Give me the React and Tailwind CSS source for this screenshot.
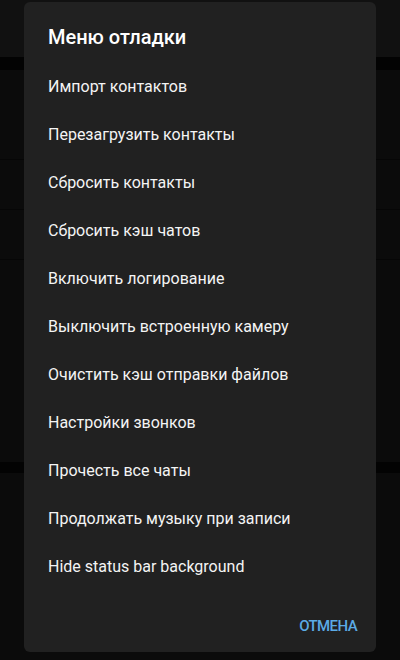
const items = [
  'Импорт контактов',
  'Перезагрузить контакты',
  'Сбросить контакты',
  'Сбросить кэш чатов',
  'Включить логирование',
  'Выключить встроенную камеру',
  'Очистить кэш отправки файлов',
  'Настройки звонков',
  'Прочесть все чаты',
  'Продолжать музыку при записи',
  'Hide status bar background',
];

export default function App() {
  return (
    <div
      className="relative w-[400px] h-[660px] overflow-hidden bg-[#0b0b0b]"
      style={{ fontFamily: 'Roboto, "Noto Sans", sans-serif' }}
    >
      {/* dimmed app behind the dialog */}
      <div className="flex flex-col">
        <div className="h-[57px] bg-[#111111]" />
        <div className="h-[13px] bg-[#030303]" />
        <div className="h-[90px] border-b border-[#060606]" />
        <div className="h-[50px] border-b border-[#060606]" />
        <div className="h-[50px] border-b border-[#060606]" />
        <div className="h-[202px]" />
        <div className="h-[11px] bg-[#030303]" />
      </div>

      {/* dialog */}
      <div className="absolute left-[24px] top-[2px] w-[352px] h-[650px] rounded-[6px] bg-[#212121] flex flex-col">
        <div className="px-[24px] pt-[22px] pb-[13px] text-[20px] leading-[26px] font-medium text-white">
          Меню отладки
        </div>
        <div className="flex flex-col">
          {items.map((t) => (
            <div
              key={t}
              className="h-[48px] flex items-center px-[24px] text-[16px] text-[#f4f4f4]"
            >
              {t}
            </div>
          ))}
        </div>
        <div className="flex-1" />
        <div className="flex justify-end px-[19px] pb-[15px]">
          <span className="text-[15px] font-medium tracking-[-0.6px] text-[#5babe5]">
            ОТМЕНА
          </span>
        </div>
      </div>
    </div>
  );
}
